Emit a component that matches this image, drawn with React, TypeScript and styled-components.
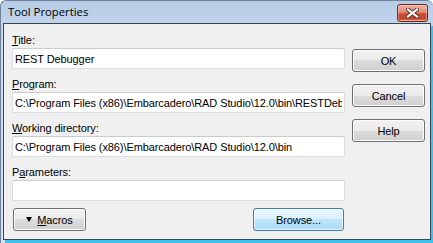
import styled, { createGlobalStyle } from 'styled-components';

const GlobalStyle = createGlobalStyle`
  html, body {
    margin: 0;
    padding: 0;
    background: #ffffff;
  }
  body {
    font-family: "Liberation Sans", Arial, sans-serif;
    font-size: 11px;
    letter-spacing: -0.1px;
    color: #000;
  }
`;

const Window = styled.div`
  width: 433px;
  height: 243px;
  box-sizing: border-box;
  display: flex;
  flex-direction: column;
  background: linear-gradient(#b6cce6, #cadbef 40px, #d3e2f3);
  border-left: 1px solid #6f8299;
  border-top: 1px solid #6f8299;
  border-top-left-radius: 6px;
  border-top-right-radius: 6px;
  overflow: hidden;
`;

const TitleBar = styled.div`
  height: 22px;
  flex: none;
  display: flex;
  align-items: flex-start;
  justify-content: space-between;
  padding: 0 5px 0 7px;
`;

const Caption = styled.span`
  font-family: "Open Sans", "Noto Sans", sans-serif;
  font-size: 11.3px;
  letter-spacing: 0;
  line-height: 22px;
  color: #000;
`;

const CloseButton = styled.div`
  width: 31px;
  height: 18px;
  margin-top: 3px;
  box-sizing: border-box;
  border: 1px solid #6b2b1f;
  border-radius: 3px;
  background: linear-gradient(#ecb3a5 0%, #e08a75 45%, #cc4b30 55%, #c4432a 85%, #d98a73 100%);
  box-shadow: inset 0 0 0 1px rgba(255, 220, 210, 0.45);
  display: flex;
  align-items: center;
  justify-content: center;
`;

const Client = styled.div`
  flex: 1;
  margin: 0 2px 3px 2px;
  border: 1px solid #3b4654;
  background: #f0f0f0;
  box-shadow: 2px 3px 0 #38c2f0;
  display: grid;
  grid-template-columns: 333px 73px;
  column-gap: 7px;
  align-items: start;
  padding: 10px 5px 0 8px;
`;

const FormColumn = styled.div`
  display: flex;
  flex-direction: column;
`;

const FieldList = styled.div`
  display: flex;
  flex-direction: column;
  gap: 9px;
`;

const Field = styled.div`
  display: flex;
  flex-direction: column;
  gap: 1px;
`;

const Label = styled.label`
  height: 13px;
  line-height: 13px;
  white-space: nowrap;
`;

const Key = styled.span`
  text-decoration: underline;
  text-underline-offset: 1px;
`;

const Edit = styled.input`
  height: 21px;
  box-sizing: border-box;
  margin: 0;
  padding: 0 2px;
  border: 1px solid #dadcdf;
  border-top-color: #c9cbce;
  border-radius: 2px;
  background: #ffffff;
  font-family: "Liberation Sans", Arial, sans-serif;
  font-size: 11px;
  letter-spacing: -0.1px;
  color: #000;
  outline: none;
`;

const Footer = styled.div`
  margin-top: 7px;
  display: flex;
  justify-content: space-between;
  padding: 0 1px;
`;

const ButtonColumn = styled.div`
  margin-top: 15px;
  display: flex;
  flex-direction: column;
  gap: 12px;
`;

const Button = styled.button<{ $width?: number; $default?: boolean }>`
  width: ${(p) => p.$width ?? 73}px;
  height: 23px;
  box-sizing: border-box;
  margin: 0;
  padding: 0;
  border: 1px solid ${(p) => (p.$default ? '#3c7fb1' : '#707070')};
  border-radius: 3px;
  background: ${(p) =>
    p.$default
      ? 'linear-gradient(#eaf6fd 0%, #d9f0fc 50%, #bee6fd 50%, #a9dbf6 100%)'
      : 'linear-gradient(#f2f2f2 0%, #ebebeb 50%, #dddddd 50%, #cfcfcf 100%)'};
  box-shadow: inset 0 0 0 1px ${(p) => (p.$default ? 'rgba(255,255,255,0.7)' : '#fcfcfc')};
  font-family: "Liberation Sans", Arial, sans-serif;
  font-size: 11px;
  letter-spacing: -0.1px;
  color: #000;
  display: flex;
  align-items: center;
  justify-content: center;
  gap: 5px;
`;

function CloseGlyph() {
  return (
    <svg width="13" height="10" viewBox="0 0 13 10">
      <path d="M2 1.5 L11 8.5 M11 1.5 L2 8.5" stroke="#5a2a22" strokeWidth="4" strokeLinecap="square" />
      <path d="M2 1.5 L11 8.5 M11 1.5 L2 8.5" stroke="#ffffff" strokeWidth="2.2" strokeLinecap="square" />
    </svg>
  );
}

function DownTriangle() {
  return (
    <svg width="6" height="5" viewBox="0 0 6 5">
      <polygon points="0,0 6,0 3,5" fill="#000" />
    </svg>
  );
}

export default function App() {
  return (
    <>
      <GlobalStyle />
      <Window>
        <TitleBar>
          <Caption>Tool Properties</Caption>
          <CloseButton>
            <CloseGlyph />
          </CloseButton>
        </TitleBar>
        <Client>
          <FormColumn>
            <FieldList>
              <Field>
                <Label>
                  <Key>T</Key>itle:
                </Label>
                <Edit readOnly value="REST Debugger" />
              </Field>
              <Field>
                <Label>
                  <Key>P</Key>rogram:
                </Label>
                <Edit
                  readOnly
                  value="C:\Program Files (x86)\Embarcadero\RAD Studio\12.0\bin\RESTDebugger.exe"
                />
              </Field>
              <Field>
                <Label>
                  <Key>W</Key>orking directory:
                </Label>
                <Edit readOnly value="C:\Program Files (x86)\Embarcadero\RAD Studio\12.0\bin" />
              </Field>
              <Field>
                <Label>
                  P<Key>a</Key>rameters:
                </Label>
                <Edit readOnly value="" />
              </Field>
            </FieldList>
            <Footer>
              <Button>
                <DownTriangle />
                <span>
                  <Key>M</Key>acros
                </span>
              </Button>
              <Button $width={91} $default>
                Browse...
              </Button>
            </Footer>
          </FormColumn>
          <ButtonColumn>
            <Button>OK</Button>
            <Button>Cancel</Button>
            <Button>Help</Button>
          </ButtonColumn>
        </Client>
      </Window>
    </>
  );
}
